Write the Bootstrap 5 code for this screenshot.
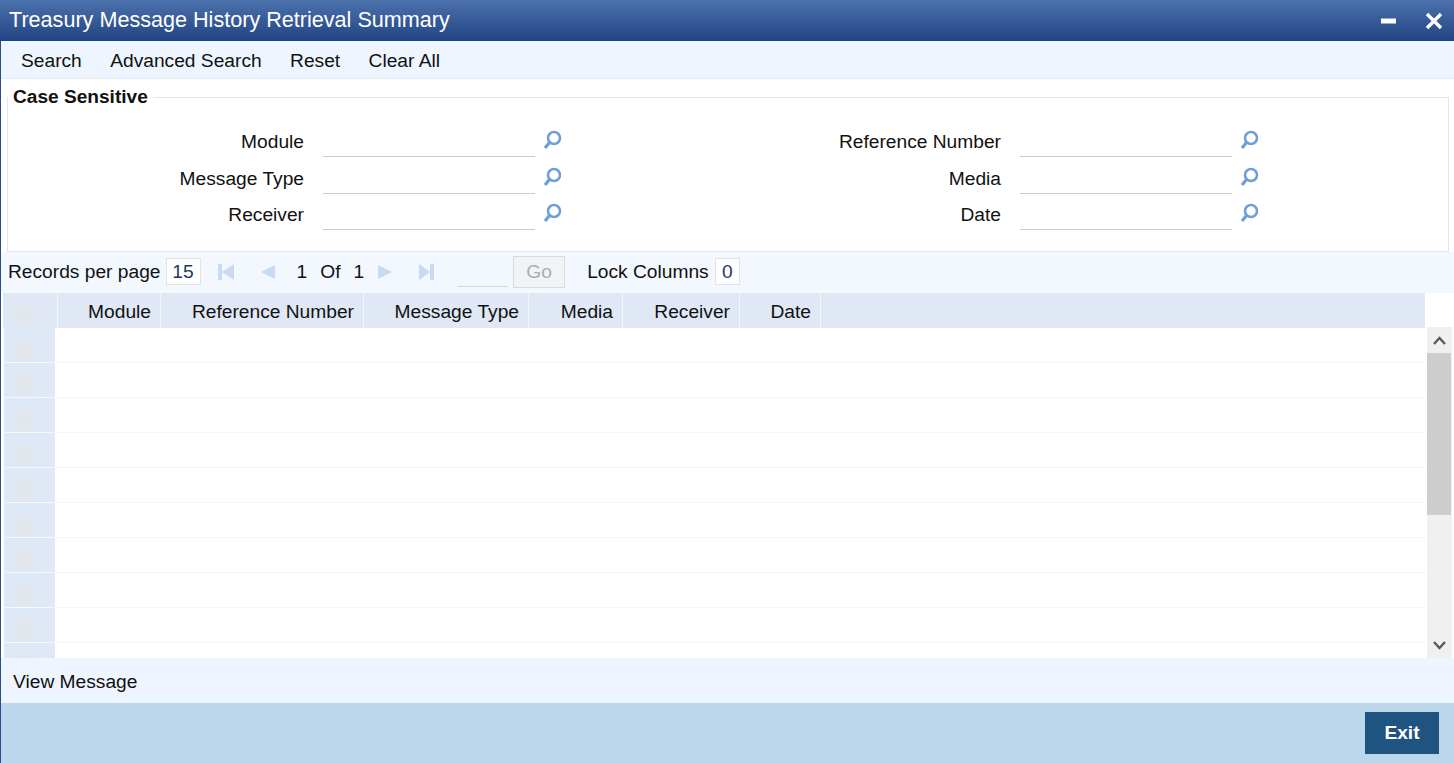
<!DOCTYPE html>
<html lang="en">
<head>
<meta charset="utf-8">
<title>Treasury Message History Retrieval Summary</title>
<link href="https://cdn.jsdelivr.net/npm/bootstrap@5.3.0/dist/css/bootstrap.min.css" rel="stylesheet">
<style>
html,body{height:100%;margin:0;overflow:hidden;background:#fff}
body{font-family:"Liberation Sans",Arial,sans-serif;font-size:19.2px;color:#111;line-height:1.15}
.shell{height:763px;border-left:1px solid #2a5083;display:flex;flex-direction:column}
.titlebar{height:41px;margin-left:-1px;padding:0 11px 0 9px;background:linear-gradient(#4b72ad,#224383);color:#fff;font-size:21.6px;flex:none}
.winbtn{display:block}
.toolstrip{height:38px;padding:3px 0 0 20px;background:#eef5fe;border-bottom:1px solid #e6e9ee;gap:28.400px;flex:none}
.casebox{height:155px;margin:18px 5px 0 6px;border:1px solid #e3e6ea;position:relative;flex:none}
.caselegend{position:absolute;left:0;top:-12px;padding:0 5px;background:#fff;font-weight:700;font-size:19.1px;line-height:22px}
.fieldrows{padding-top:25px}
.fieldrow{height:36.500px}
.fieldcell{width:697px;display:flex;align-items:flex-start}
.fieldlabel{width:296px;text-align:right;padding-top:8px;margin-right:19px}
.fieldline{width:212px;height:34px;border-bottom:1px solid #c9cdd2}
.lens{margin:7px 0 0 8px;flex:none}
.pagerbar{height:41px;padding:0 0 2px 7px;background:#f3f8fe;flex:none}
.pagertext{padding-top:2px;flex:none}
.numbox{height:27px;border:1px solid #dfe3e8;background:#fff;color:#1d3a5c;text-align:center;line-height:25px;flex:none}
.pagericon{display:block;flex:none}
.gotext{width:50px;height:29px;border-bottom:1px solid #d5d8dc;margin-top:2px;flex:none}
.gobtn{width:52px;height:32px;border:1px solid #d8dcdf;background:#f1f3f5;color:#a9aeb3;text-align:center;line-height:30px;flex:none}
.gridzone{height:365px;flex:none;overflow:hidden;display:flex;padding-left:2px}
.gridmain{width:1422px;flex:none}
.headrow{height:35px;background:#e0e8f6;display:flex}
.headcell{border-right:1px solid #f4f6fb;text-align:right;padding:8px 9px 0 0;flex:none}
.sel0{width:55px}.c1{width:103px}.c2{width:203px}.c3{width:165px}.c4{width:94px}.c5{width:117px}.c6{width:81px}
.bodyrows{height:330px;overflow:hidden}
.datarow{height:35px;border-bottom:1px solid #fbf5e8;display:flex}
.rowhead{width:51px;height:35px;background:#dfe8f6;border-bottom:1px solid #f4f7fb;padding:12px 0 0 10px;flex:none;margin-left:1px}
.rowmark{display:block;width:20px;height:20px;background:#e2e6ed}
.rowmark.headmark{margin:5px 0 0 12px}
.vscroll{width:25px;margin:34px 0 0 2px;background:#f0f0f0;display:flex;flex-direction:column;flex:none}
.arrowbox{height:26px;display:flex;align-items:center;justify-content:center;flex:none}
.thumbbar{height:162px;background:#cdcdcd;flex:none;margin-right:1px}
.vspace{flex:1}
.actionstrip{height:45px;background:#eef5fe;padding:3px 0 0 12px;flex:none}
.footbar{flex:1;background:#bcd7ec;padding:9px 15px 0 0}
.exitbtn{width:74px;height:42px;background:#1f5380;color:#fff;font-weight:700;border:0;border-radius:0;font-size:19.2px;padding:0}
.exitbtn:hover{background:#1f5380;color:#fff}
</style>
</head>
<body>
<div class="shell">
  <header class="titlebar d-flex align-items-center justify-content-between">
    <span>Treasury Message History Retrieval Summary</span>
    <span class="d-flex align-items-center" style="gap:29px">
      <svg class="winbtn" width="16" height="16" viewBox="0 0 16 16"><rect x="1" y="5.500" width="15" height="5" fill="#fff"/></svg>
      <svg class="winbtn" width="18" height="18" viewBox="0 0 18 18"><path d="M2 2 16 16M16 2 2 16" stroke="#fff" stroke-width="3.400" fill="none"/></svg>
    </span>
  </header>

  <nav class="toolstrip d-flex align-items-center">
    <span>Search</span><span>Advanced Search</span><span>Reset</span><span>Clear All</span>
  </nav>

  <section class="casebox">
    <div class="caselegend">Case Sensitive</div>
    <div class="fieldrows">
      <div class="fieldrow d-flex">
        <div class="fieldcell"><label class="fieldlabel">Module</label><div class="fieldline"></div><svg class="lens" width="19" height="20" viewBox="0 0 19 20"><circle cx="11" cy="8" r="6" fill="none" stroke="#6f9fd6" stroke-width="2.600"/><path d="M6.500 12.500 2 18" stroke="#6f9fd6" stroke-width="3.200" fill="none"/></svg></div>
        <div class="fieldcell"><label class="fieldlabel">Reference Number</label><div class="fieldline"></div><svg class="lens" width="19" height="20" viewBox="0 0 19 20"><circle cx="11" cy="8" r="6" fill="none" stroke="#6f9fd6" stroke-width="2.600"/><path d="M6.500 12.500 2 18" stroke="#6f9fd6" stroke-width="3.200" fill="none"/></svg></div>
      </div>
      <div class="fieldrow d-flex">
        <div class="fieldcell"><label class="fieldlabel">Message Type</label><div class="fieldline"></div><svg class="lens" width="19" height="20" viewBox="0 0 19 20"><circle cx="11" cy="8" r="6" fill="none" stroke="#6f9fd6" stroke-width="2.600"/><path d="M6.500 12.500 2 18" stroke="#6f9fd6" stroke-width="3.200" fill="none"/></svg></div>
        <div class="fieldcell"><label class="fieldlabel">Media</label><div class="fieldline"></div><svg class="lens" width="19" height="20" viewBox="0 0 19 20"><circle cx="11" cy="8" r="6" fill="none" stroke="#6f9fd6" stroke-width="2.600"/><path d="M6.500 12.500 2 18" stroke="#6f9fd6" stroke-width="3.200" fill="none"/></svg></div>
      </div>
      <div class="fieldrow d-flex">
        <div class="fieldcell"><label class="fieldlabel">Receiver</label><div class="fieldline"></div><svg class="lens" width="19" height="20" viewBox="0 0 19 20"><circle cx="11" cy="8" r="6" fill="none" stroke="#6f9fd6" stroke-width="2.600"/><path d="M6.500 12.500 2 18" stroke="#6f9fd6" stroke-width="3.200" fill="none"/></svg></div>
        <div class="fieldcell"><label class="fieldlabel">Date</label><div class="fieldline"></div><svg class="lens" width="19" height="20" viewBox="0 0 19 20"><circle cx="11" cy="8" r="6" fill="none" stroke="#6f9fd6" stroke-width="2.600"/><path d="M6.500 12.500 2 18" stroke="#6f9fd6" stroke-width="3.200" fill="none"/></svg></div>
      </div>
    </div>
  </section>

  <div class="pagerbar d-flex align-items-center">
    <span class="pagertext" style="margin-right:5px">Records per page</span>
    <span class="numbox" style="width:35px">15</span>
    <svg class="pagericon" style="margin-left:16px" width="18" height="18" viewBox="0 0 18 18"><path d="M1 1h4v16H1zM17 1v16L5 9z" fill="#c6daf1"/></svg>
    <svg class="pagericon" style="margin-left:25px" width="15" height="16" viewBox="0 0 15 16"><path d="M15 1v14L1 8z" fill="#c6daf1"/></svg>
    <span class="pagertext" style="margin-left:22px">1</span>
    <span class="pagertext" style="margin-left:13px">Of</span>
    <span class="pagertext" style="margin-left:13px">1</span>
    <svg class="pagericon" style="margin-left:13px" width="15" height="16" viewBox="0 0 15 16"><path d="M1 1v14l14-7z" fill="#c6daf1"/></svg>
    <svg class="pagericon" style="margin-left:26px" width="17" height="18" viewBox="0 0 17 18"><path d="M1 1v16l11-8zM12 1h4v16h-4z" fill="#c6daf1"/></svg>
    <span class="gotext" style="margin-left:23px"></span>
    <span class="gobtn" style="margin-left:5px">Go</span>
    <span class="pagertext" style="margin-left:22px">Lock Columns</span>
    <span class="numbox" style="width:25px;margin-left:6px">0</span>
  </div>

  <div class="gridzone">
    <div class="gridmain">
      <div class="headrow">
        <div class="headcell sel0"><span class="rowmark headmark"></span></div>
        <div class="headcell c1">Module</div>
        <div class="headcell c2">Reference Number</div>
        <div class="headcell c3">Message Type</div>
        <div class="headcell c4">Media</div>
        <div class="headcell c5">Receiver</div>
        <div class="headcell c6">Date</div>
      </div>
      <div class="bodyrows">
        <div class="datarow"><div class="rowhead"><span class="rowmark"></span></div></div>
        <div class="datarow"><div class="rowhead"><span class="rowmark"></span></div></div>
        <div class="datarow"><div class="rowhead"><span class="rowmark"></span></div></div>
        <div class="datarow"><div class="rowhead"><span class="rowmark"></span></div></div>
        <div class="datarow"><div class="rowhead"><span class="rowmark"></span></div></div>
        <div class="datarow"><div class="rowhead"><span class="rowmark"></span></div></div>
        <div class="datarow"><div class="rowhead"><span class="rowmark"></span></div></div>
        <div class="datarow"><div class="rowhead"><span class="rowmark"></span></div></div>
        <div class="datarow"><div class="rowhead"><span class="rowmark"></span></div></div>
        <div class="datarow"><div class="rowhead"><span class="rowmark"></span></div></div>
      </div>
    </div>
    <div class="vscroll">
      <div class="arrowbox"><svg width="13" height="9" viewBox="0 0 13 9"><path d="M1 8 6.500 2 12 8" fill="none" stroke="#5c5552" stroke-width="2.300"/></svg></div>
      <div class="thumbbar"></div>
      <div class="vspace"></div>
      <div class="arrowbox"><svg width="13" height="9" viewBox="0 0 13 9"><path d="M1 1 6.500 7 12 1" fill="none" stroke="#5c5552" stroke-width="2.300"/></svg></div>
    </div>
  </div>

  <div class="actionstrip d-flex align-items-center">View Message</div>

  <footer class="footbar d-flex justify-content-end align-items-start">
    <button type="button" class="btn exitbtn">Exit</button>
  </footer>
</div>
<script src="https://cdn.jsdelivr.net/npm/bootstrap@5.3.0/dist/js/bootstrap.bundle.min.js"></script>
</body>
</html>
